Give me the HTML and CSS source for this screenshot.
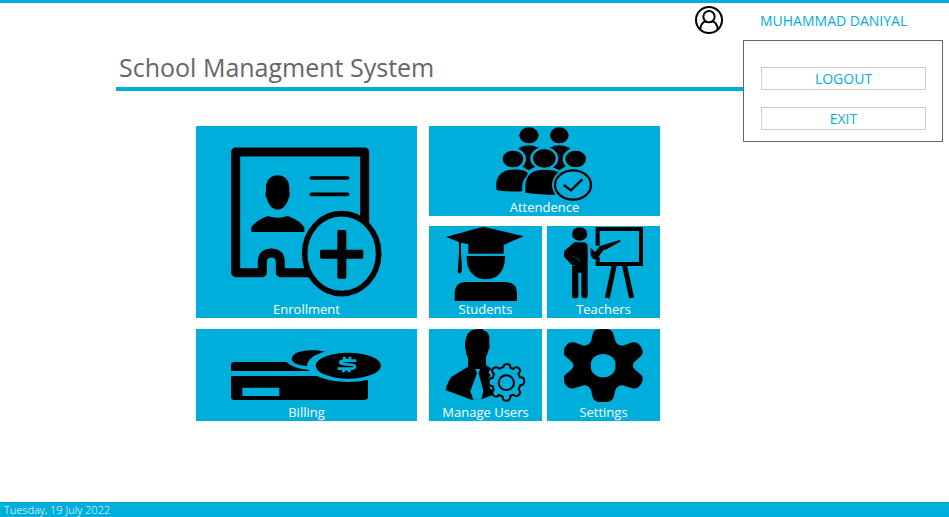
FILE: index.html
```html
<!DOCTYPE html>
<html lang="en">
<head>
<meta charset="utf-8">
<title>School Managment System</title>
<link rel="stylesheet" href="styles.css">
</head>
<body>
<header class="topbar">
  <svg class="avatar" viewBox="0 0 84 84" aria-hidden="true">
    <circle cx="42" cy="42" r="39"/>
    <circle cx="42" cy="32" r="17"/>
    <path d="M16 70C17 55 24 48 33 46M68 70C67 55 60 48 51 46"/>
  </svg>
  <div class="account">
    <button class="user" type="button">MUHAMMAD DANIYAL</button>
    <div class="menu">
      <button class="menu-item" type="button">LOGOUT</button>
      <button class="menu-item" type="button">EXIT</button>
    </div>
  </div>
</header>
<h1 class="title">School Managment System</h1>
<main class="tiles">
  <a class="tile" href="#enrollment">
    <svg class="icon tall" viewBox="123 18 456 516" aria-hidden="true">
      <path class="thick" d="M524 310V96H137V458H217V423Q219 399 244 399Q269 399 271 423V458H360"/>
      <path d="M263 166C284 166 298 181 298 202V216Q302 224 296 235C290 257 277 269 263 269C249 269 236 257 230 235Q224 224 228 216V202C228 181 242 166 263 166ZM184 336V322C195 306 212 296 233 288Q263 298 293 288C315 296 332 306 343 322V336Z"/>
      <path class="rule" d="M364 174H473M364 223H473"/>
      <ellipse class="ring" cx="455" cy="401" rx="111" ry="120"/>
      <path d="M446 330H465Q469 330 469 335V389H516Q520 389 520 394V411Q520 416 516 416H469V471Q469 476 465 476H446Q442 476 442 471V416H395Q390 416 390 411V394Q390 389 395 389H442V335Q442 330 446 330Z"/>
    </svg>
    <span class="label">Enrollment</span>
  </a>
  <div class="group">
    <a class="tile wide" href="#attendence">
      <svg class="icon medium" viewBox="212 18 294 225" aria-hidden="true">
        <ellipse cx="311" cy="46" rx="29" ry="24"/>
        <ellipse cx="402" cy="46" rx="28" ry="24"/>
        <path d="M280 84Q311 68 342 84L330 140L309 151L286 137ZM371 84Q402 68 434 84L424 137L402 151L380 140Z"/>
        <ellipse class="gap" cx="263" cy="117" rx="39" ry="33"/>
        <ellipse class="gap" cx="451" cy="117" rx="39" ry="33"/>
        <ellipse cx="263" cy="117" rx="31" ry="25"/>
        <ellipse cx="451" cy="117" rx="31" ry="25"/>
        <path d="M213 210V190C217 153 252 141 300 153Q315 160 298 176Q289 188 291 214Q244 216 213 210Z"/>
        <path d="M300 218V192C307 158 325 149 357 149C382 149 399 152 407 162Q376 184 391 224Q350 224 300 218Z"/>
        <ellipse class="gap" cx="357" cy="115" rx="42" ry="34"/>
        <ellipse cx="357" cy="115" rx="34" ry="28"/>
        <ellipse class="gap" cx="443" cy="195" rx="63" ry="53"/>
        <ellipse class="badge" cx="443" cy="195" rx="54" ry="44"/>
        <path class="check" d="M415 195L437 211L471 178"/>
      </svg>
      <span class="label">Attendence</span>
    </a>
    <a class="tile" href="#students">
      <svg class="icon" viewBox="63 18 240 225" aria-hidden="true">
        <path d="M63 51L175 20L296 49L236 75V101H130V73L108 68V100Q112 145 109 158Q104 164 98 157L102 100V66Z"/>
        <path d="M125 108H240C241 151 219 178 183 178C147 178 123 151 125 108ZM89 243V220Q90 186 124 186H240Q276 186 276 220V243Z"/>
      </svg>
      <span class="label">Students</span>
    </a>
    <a class="tile" href="#teachers">
      <svg class="icon" viewBox="417 18 240 225" aria-hidden="true">
        <path class="frame" d="M518 77V27H648V132H518V112"/>
        <path class="leg" d="M568 134L547 234M598 134L620 234"/>
        <ellipse cx="464" cy="42" rx="23" ry="20"/>
        <path d="M448 67H474Q488 67 488 82V228Q487 235 478 235Q470 235 469 228V158H460V228Q459 235 450 235Q441 235 441 228V138Q462 137 463 123Q461 114 450 112L435 102L443 95V109L459 117Q467 131 454 136H441L418 111Q410 102 417 94Z"/>
        <path d="M497 83L510 96L525 78L584 60L588 64L546 87L535 91L521 110Q510 123 502 114L497 106Z"/>
      </svg>
      <span class="label">Teachers</span>
    </a>
  </div>
  <a class="tile" href="#billing">
    <svg class="icon large" viewBox="123 21 456 225" aria-hidden="true">
      <path d="M123 147V126Q124 120 133 120H289Q309 139 353 143L359 147Z"/>
      <path d="M305 110C308 86 360 79 405 89C374 97 352 111 351 132C324 130 305 122 305 110Z"/>
      <ellipse cx="475" cy="131" rx="98" ry="39"/>
      <path fill-rule="evenodd" d="M123 162H382C424 182 485 184 534 173V226Q533 234 522 234H134Q123 234 123 226ZM157 197V222H268V197Z"/>
      <path class="dollar" d="M499 116H466Q449 116 451 122Q454 126 473 127Q495 128 495 134Q494 140 481 140H443M463 104V114H480V104M460 151V142H478V151"/>
    </svg>
    <span class="label">Billing</span>
  </a>
  <div class="group">
    <a class="tile" href="#users">
      <svg class="icon" viewBox="63 21 240 225" aria-hidden="true">
        <path d="M124 45Q130 24 154 22L175 20Q171 25 178 26Q192 31 193 47V68Q196 76 191 83Q188 95 183 105V129L200 140Q184 149 197 160Q183 175 192 188Q193 202 207 206L203 219L172 231L140 233L61 204Q70 176 79 165L129 134V108Q123 98 122 83Q117 70 124 45Z"/>
        <path class="cut" d="M150 141H165L161 154L175 206L169 233H145L136 208L156 154Z"/>
        <path class="gear" d="M235 135Q236 126 246 127Q257 125 256 137L265 141Q273 132 282 139Q289 147 280 155L285 166Q298 165 298 178Q298 190 286 190L281 202Q290 213 280 220Q273 226 265 218L256 222Q256 236 245 236Q233 237 233 224L222 219Q213 229 205 220Q198 212 206 203L203 193Q190 192 191 181Q191 168 203 168L207 156Q197 147 205 139Q214 132 223 140Z"/>
        <ellipse class="gear" cx="244" cy="182" rx="23" ry="22"/>
      </svg>
      <span class="label">Manage Users</span>
    </a>
    <a class="tile" href="#settings">
      <svg class="icon" viewBox="417 21 240 225" aria-hidden="true">
        <path fill-rule="evenodd" d="M503 38Q505 22 523 21H546Q563 23 566 38L571 57Q577 71 593 71L622 61Q638 58 648 74Q658 91 649 101L629 119Q618 130 629 142L649 159Q658 169 648 187Q638 203 622 199L593 190Q577 190 571 204L566 225Q562 239 546 240H523Q506 239 503 225L498 204Q492 190 477 190L447 199Q432 203 421 187Q410 170 420 159L440 142Q451 130 440 119L420 101Q410 91 421 74Q431 58 447 61L477 71Q492 71 498 57ZM498 131A37 30 0 1 0 571 131A37 30 0 1 0 498 131Z"/>
      </svg>
      <span class="label">Settings</span>
    </a>
  </div>
</main>
<footer class="status">Tuesday, 19 July 2022</footer>
</body>
</html>
```
FILE: styles.css
```css
:root {
  --accent: #00aedb;
}

* {
  box-sizing: border-box;
}

body {
  margin: 0;
  min-height: 100vh;
  display: flex;
  flex-direction: column;
  border-top: 3px solid var(--accent);
  background: #fff;
  font-family: "Open Sans", "Noto Sans", sans-serif;
  font-weight: 400;
}

button {
  padding: 0;
  background: #fff;
  color: var(--accent);
  font: inherit;
  font-size: 14px;
  line-height: 20px;
}

.topbar {
  display: flex;
  justify-content: flex-end;
  gap: 20px;
  height: 46px;
  padding: 3px 6px 0;
}

.avatar {
  width: 28px;
  height: 28px;
  fill: none;
  stroke: #000;
  stroke-width: 6;
}

.account {
  position: relative;
  width: 200px;
}

.user {
  display: block;
  margin-left: 17px;
  padding: 5px 0;
  border: 0;
}

.menu {
  position: absolute;
  top: 34px;
  left: 0;
  right: 0;
  display: grid;
  gap: 17px;
  padding: 26px 16px 11px 17px;
  border: 1px solid #666;
  background: #fff;
}

.menu-item {
  height: 23px;
  padding-top: 1px;
  border: 1px solid #ccc;
}

.title {
  margin: 0 100px 0 116px;
  padding: 0 3px 2px;
  border-bottom: 4px solid var(--accent);
  color: #666;
  font-size: 25px;
  font-weight: 400;
  line-height: 36px;
}

.tiles {
  display: grid;
  grid-template-columns: 221px 231px;
  gap: 11px 12px;
  margin: 35px 0 32px 196px;
}

.group {
  display: grid;
  grid-template-columns: 1fr 1fr;
  gap: 10px 5px;
}

.tile {
  display: grid;
  grid-template-areas: "content";
  justify-items: center;
  height: 92px;
  background: var(--accent);
  color: #fff;
  text-decoration: none;
}

.tiles > .tile {
  height: auto;
}

.group > .wide {
  grid-column: span 2;
  height: 90px;
}

.icon {
  grid-area: content;
  width: 80px;
  height: 75px;
}

.medium {
  width: 98px;
}

.large {
  width: 152px;
}

.tall {
  width: 152px;
  height: 172px;
}

.label {
  grid-area: content;
  align-self: end;
  font-size: 13px;
  line-height: 18px;
}

.thick,
.rule,
.ring,
.badge,
.check,
.frame,
.leg,
.gear,
.dollar {
  fill: none;
  stroke: #000;
}

.thick {
  stroke-width: 27;
  stroke-linejoin: round;
}

.rule {
  stroke-width: 11;
  stroke-linecap: round;
}

.ring {
  fill: var(--accent);
  stroke-width: 17;
}

.gap,
.cut {
  fill: var(--accent);
}

.badge {
  fill: var(--accent);
  stroke-width: 7;
}

.check {
  stroke-width: 7;
}

.frame {
  stroke-width: 12;
}

.leg {
  stroke-width: 15;
}

.gear {
  fill: var(--accent);
  stroke-width: 6;
}

.dollar {
  stroke: var(--accent);
  stroke-width: 8;
}

.status {
  margin-top: auto;
  padding-left: 4px;
  background: var(--accent);
  color: #fff;
  font-size: 11px;
  font-weight: 300;
  line-height: 15px;
}
```
